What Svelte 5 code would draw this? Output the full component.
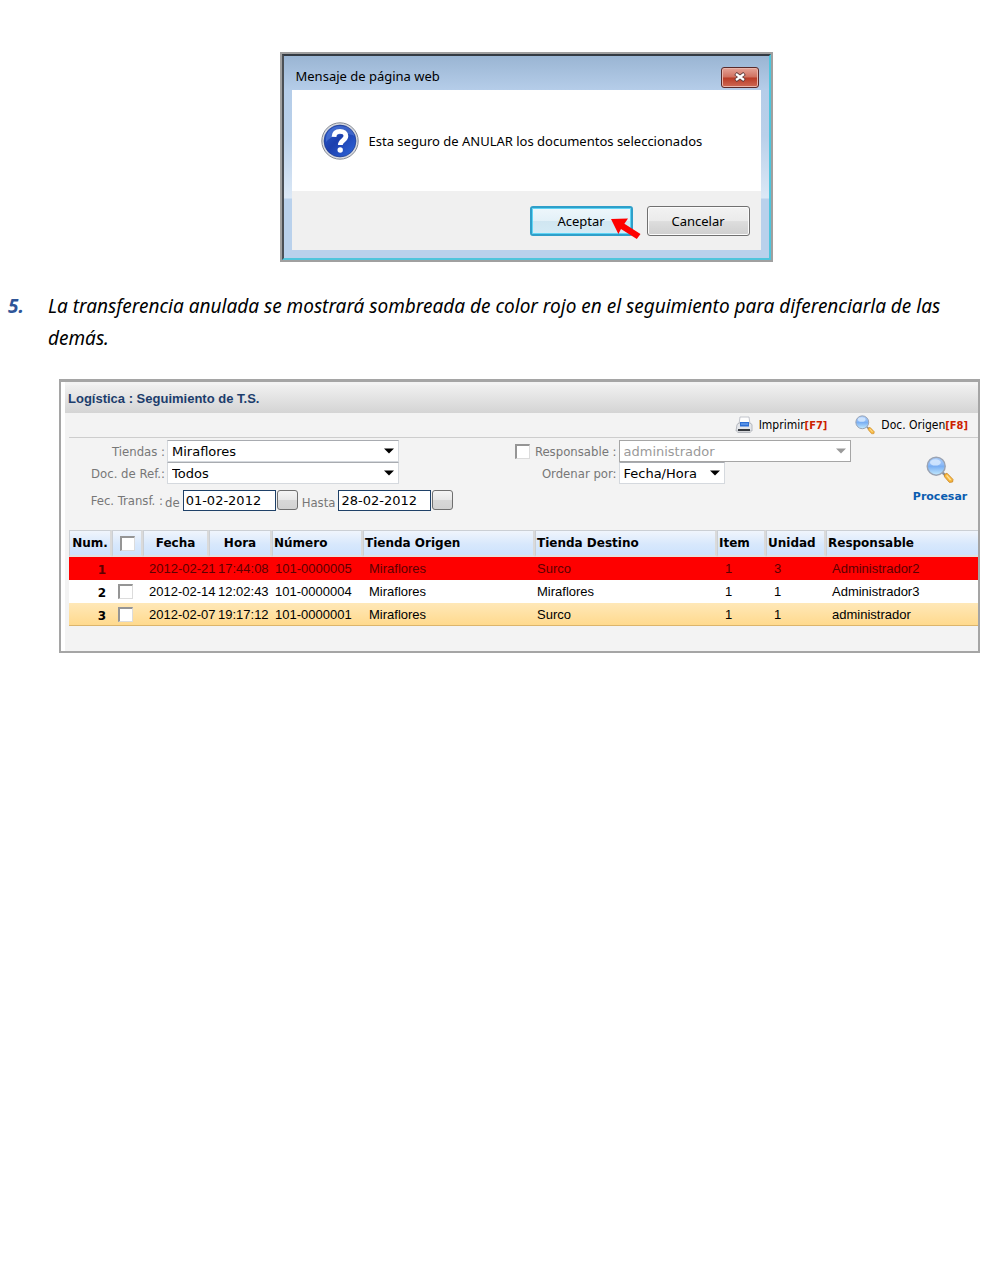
<script>
  const columns = [
    { key: 'num', label: 'Num.' },
    { key: 'check', label: '' },
    { key: 'fecha', label: 'Fecha' },
    { key: 'hora', label: 'Hora' },
    { key: 'numero', label: 'Número' },
    { key: 'origen', label: 'Tienda Origen' },
    { key: 'destino', label: 'Tienda Destino' },
    { key: 'item', label: 'Item' },
    { key: 'unidad', label: 'Unidad' },
    { key: 'responsable', label: 'Responsable' }
  ];

  const rows = [
    { num: 1, fecha: '2012-02-21', hora: '17:44:08', numero: '101-0000005', origen: 'Miraflores', destino: 'Surco', item: 1, unidad: 3, responsable: 'Administrador2', state: 'void' },
    { num: 2, fecha: '2012-02-14', hora: '12:02:43', numero: '101-0000004', origen: 'Miraflores', destino: 'Miraflores', item: 1, unidad: 1, responsable: 'Administrador3', state: 'plain' },
    { num: 3, fecha: '2012-02-07', hora: '19:17:12', numero: '101-0000001', origen: 'Miraflores', destino: 'Surco', item: 1, unidad: 1, responsable: 'administrador', state: 'active' }
  ];
</script>

{#snippet lens(cls)}
  <svg class={cls} viewBox="0 0 28 28" aria-hidden="true">
    <defs>
      <linearGradient id="glass-{cls}" x1="0" y1="0" x2="0" y2="1">
        <stop offset="0" stop-color="#a9cdfb" />
        <stop offset=".42" stop-color="#8dbaf6" />
        <stop offset=".5" stop-color="#79aef3" />
        <stop offset="1" stop-color="#c3eafe" />
      </linearGradient>
    </defs>
    <path d="M16.6 16.6l3 3" stroke="#8a8f98" stroke-width="2.4" />
    <path d="M18.500 18.400l2.500-1.200 6 6.200-.4 2.600-3.200.4-4.900-5.600z" fill="#f6b73c" stroke="#c98425" stroke-width=".8" />
    <path d="M20.6 19.4l4 4.6" stroke="#ffe09a" stroke-width="1.4" />
    <circle cx="10.200" cy="10.200" r="9" fill="url(#glass-{cls})" stroke="#9aa3b3" stroke-width="1.400" />
    <ellipse cx="9.4" cy="6.4" rx="5.400" ry="3.200" fill="#d9ebff" opacity=".8" />
  </svg>
{/snippet}

{#snippet arrow()}
  <svg class="arrow" viewBox="0 0 10 6" aria-hidden="true"><path d="M0 .5h10L5 5.5z" fill="currentColor" /></svg>
{/snippet}

<main>
  <div class="stage">
    <section class="dialog" role="dialog" aria-labelledby="dialog-title">
      <div class="window">
        <header class="titlebar">
          <h2 id="dialog-title">Mensaje de página web</h2>
          <button class="close" aria-label="Cerrar">
            <svg viewBox="0 0 14 10" aria-hidden="true">
              <path d="M2.500 1.500l9 7M11.500 1.500l-9 7" stroke="#5c3a3a" stroke-width="4" />
              <path d="M3 2l8 6M11 2l-8 6" stroke="#fff" stroke-width="2.200" />
            </svg>
          </button>
        </header>
        <div class="message">
          <svg class="question" viewBox="0 0 38 38" aria-hidden="true">
            <defs>
              <linearGradient id="ball" x1="0" y1="0" x2="1" y2="1">
                <stop offset="0" stop-color="#2a5ed0" />
                <stop offset=".45" stop-color="#1c3fae" />
                <stop offset="1" stop-color="#2f68dc" />
              </linearGradient>
            </defs>
            <circle cx="19" cy="19" r="18.2" fill="#d9dce2" stroke="#858a94" stroke-width="1" />
            <circle cx="19" cy="19" r="16" fill="url(#ball)" stroke="#1b3480" stroke-width=".6" />
            <path d="M5 20C4 9 12 4 19 4c8 0 13 4 14.500 10C25 10 12 12 5 20z" fill="#6f95e6" opacity=".4" />
            <path d="M13 14.800c.2-3.700 2.600-5.400 6-5.400 3.600 0 5.900 1.900 5.900 4.700 0 4.300-5.600 4.300-5.600 8.900" fill="none" stroke="#fff" stroke-width="4.800" />
            <circle cx="19.200" cy="28" r="2.700" fill="#fff" />
          </svg>
          <p>Esta seguro de ANULAR los documentos seleccionados</p>
        </div>
        <footer class="actions">
          <button class="btn primary">
            Aceptar
            <svg class="pointer" viewBox="0 0 30 22" aria-hidden="true"><path d="M0 1l17-.5-3.600 5.200L29.500 16l-3.700 5L10 11l-2.600 5z" fill="#fe0000" /></svg>
          </button>
          <button class="btn">Cancelar</button>
        </footer>
      </div>
    </section>
  </div>

  <div class="step">
    <span class="step-number">5.</span>
    <p>La transferencia anulada se mostrará sombreada de color rojo en el seguimiento para diferenciarla de las demás.</p>
  </div>

  <section class="panel">
    <h1>Logística : Seguimiento de T.S.</h1>
    <div class="toolbar">
      <button class="tool">
        <svg class="printer" viewBox="0 0 18 18" aria-hidden="true">
          <path d="M5 1h9l1 7H4z" fill="#fdfdfd" stroke="#b4b8c0" stroke-width=".8" />
          <path d="M2 8.500L4 7h11l2 1.500V15H1z" fill="#e4e6ea" stroke="#a7abb3" stroke-width=".8" />
          <path d="M5 6h9v4.500H5z" fill="#2d6fd6" />
          <path d="M6 8h7" stroke="#7fb2f5" stroke-width="1" />
          <path d="M3 14h12" stroke="#23262c" stroke-width="1.800" />
          <path d="M2.500 16.500h13" stroke="#b5b8be" stroke-width="1" />
        </svg>
        <span>Imprimir<b>[F7]</b></span>
      </button>
      <button class="tool">
        {@render lens('lens-small')}
        <span>Doc. Origen<b>[F8]</b></span>
      </button>
    </div>

    <form class="filters" onsubmit={(e) => e.preventDefault()}>
      <div class="group">
        <div class="field">
          <label for="tiendas">Tiendas :</label>
          <span class="select wide">
            <select id="tiendas"><option>Miraflores</option></select>
            {@render arrow()}
          </span>
        </div>
        <div class="field">
          <label for="doc">Doc. de Ref.:</label>
          <span class="select wide">
            <select id="doc"><option>Todos</option></select>
            {@render arrow()}
          </span>
        </div>
        <div class="field dates">
          <span class="caption">Fec. Transf. :</span>
          <label class="inline" for="desde">de</label>
          <input id="desde" type="text" value="01-02-2012" />
          <button class="picker" type="button" aria-label="Elegir fecha inicial"></button>
          <label class="inline" for="hasta">Hasta</label>
          <input id="hasta" type="text" value="28-02-2012" />
          <button class="picker" type="button" aria-label="Elegir fecha final"></button>
        </div>
      </div>

      <div class="group">
        <div class="field">
          <span class="with-check">
            <input id="filtrar" type="checkbox" aria-label="Filtrar por responsable" />
            <label for="responsable">Responsable :</label>
          </span>
          <span class="select wide disabled">
            <select id="responsable" disabled><option>administrador</option></select>
            {@render arrow()}
          </span>
        </div>
        <div class="field">
          <label for="orden">Ordenar por:</label>
          <span class="select narrow">
            <select id="orden"><option>Fecha/Hora</option></select>
            {@render arrow()}
          </span>
        </div>
      </div>

      <button class="process">
        {@render lens('lens-large')}
        Procesar
      </button>
    </form>

    <table>
      <colgroup>
        {#each columns as c}<col class={c.key} />{/each}
      </colgroup>
      <thead>
        <tr>
          {#each columns as c}
            <th class={c.key}>
              {#if c.key === 'check'}<input type="checkbox" aria-label="Seleccionar todos" />{:else}{c.label}{/if}
            </th>
          {/each}
        </tr>
      </thead>
      <tbody>
        {#each rows as row}
          <tr class={row.state}>
            {#each columns as c}
              <td class={c.key}>
                {#if c.key !== 'check'}{row[c.key]}{:else if row.state !== 'void'}<input type="checkbox" aria-label="Seleccionar fila {row.num}" />{/if}
              </td>
            {/each}
          </tr>
        {/each}
      </tbody>
    </table>
  </section>
</main>

<style>
  :global(body) {
    margin: 0;
    background: #fff;
  }
  main {
    padding: 52px 20px 40px 8px;
    font-family: 'DejaVu Sans', Verdana, sans-serif;
    color: #000;
  }
  h1, h2, p {
    margin: 0;
  }
  button, input, select {
    box-sizing: border-box;
    font: inherit;
    color: inherit;
  }
  button {
    padding: 0;
    border: 0;
    background: none;
  }

  /* Confirmation dialog */
  .stage {
    padding-left: 64px;
  }
  .dialog {
    box-sizing: border-box;
    max-width: 493px;
    margin: 0 auto;
    border: 2px solid #a0a0a0;
    font-family: 'Noto Sans', 'Open Sans', sans-serif;
    font-size: 13px;
  }
  .window {
    padding: 0 8px 8px;
    border: 2px solid #4fc5dc;
    border-top-color: #333a42;
    border-left-color: #4a4f55;
    background: linear-gradient(#9ab5d3 0, #b5cde9 34px, #b9d0ea 80px, #dbe8f6 142px, #b9d1ec 143px);
  }
  .titlebar {
    display: flex;
    align-items: center;
    justify-content: space-between;
    height: 34px;
    padding: 0 2px 0 4px;
  }
  h2 {
    padding-top: 6px;
    font-size: 13px;
    font-weight: 400;
  }
  .close {
    display: grid;
    place-items: center;
    width: 38px;
    height: 21px;
    margin-top: 8px;
    border: 1px solid #5a2a2a;
    border-radius: 3px;
    background: linear-gradient(#e5a397, #d0705f 48%, #b93a25 52%, #cf6a55);
    box-shadow: inset 0 0 0 1px #e9b5ab;
  }
  .close svg {
    width: 14px;
    height: 10px;
  }
  .message {
    display: flex;
    align-items: center;
    gap: 10px;
    height: 101px;
    padding-left: 29px;
    background: #fff;
  }
  .question {
    flex: none;
    width: 38px;
    height: 38px;
  }
  .actions {
    display: flex;
    justify-content: flex-end;
    gap: 14px;
    padding: 15px 11px 14px;
    background: #f0f0f0;
  }
  .btn {
    position: relative;
    width: 103px;
    height: 30px;
    border: 1px solid #707070;
    border-radius: 3px;
    background: linear-gradient(#f2f2f2, #ebebeb 48%, #dddddd 52%, #cfcfcf);
    box-shadow: inset 0 0 0 1px #fbfbfb;
  }
  .primary {
    border: 2px solid #2f9fc9;
    background: linear-gradient(#eef7fb, #e3f1f8 48%, #d0e6f1 52%, #d5ebf5);
    box-shadow: inset 0 0 0 1px #5fd4f5;
  }
  .pointer {
    position: absolute;
    left: 79px;
    top: 10px;
    width: 30px;
    height: 22px;
  }

  /* Numbered instruction */
  .step {
    display: grid;
    grid-template-columns: 40px 1fr;
    margin-top: 28px;
    font-family: 'Noto Sans', 'Open Sans', sans-serif;
    font-size: 19px;
    font-style: italic;
    line-height: 32px;
  }
  .step-number {
    font-weight: 700;
    color: #2f5597;
  }

  /* Tracking panel */
  .panel {
    margin: 25px 0 0 51px;
    padding: 3px 0 25px 4px;
    border: 2px solid #a5a5a5;
    border-top-width: 3px;
    background: linear-gradient(90deg, #fff 0 4px, #f3f3f3 4px);
  }
  h1 {
    padding-left: 3px;
    background: linear-gradient(#f0f0f0, #d4d4d4);
    font: bold 13px/28px 'Liberation Sans', Arial, sans-serif;
    color: #1c3d6c;
  }
  .toolbar {
    display: flex;
    justify-content: flex-end;
    gap: 28px;
    height: 24px;
    margin-left: 4px;
    padding-right: 10px;
    border-bottom: 1px solid #cdcdcd;
  }
  .tool {
    display: flex;
    align-items: center;
    gap: 6px;
    font: 12px 'DejaVu Sans Condensed', 'DejaVu Sans', sans-serif;
  }
  .tool b {
    color: #cc2200;
    font-size: 11px;
  }
  .printer {
    width: 18px;
    height: 18px;
  }
  .lens-small {
    width: 20px;
    height: 20px;
  }
  .filters {
    display: grid;
    grid-template-columns: 450fr 388fr 76fr;
    min-height: 90px;
    padding-top: 2px;
    font-size: 13px;
  }
  .group {
    min-width: 0;
  }
  .field {
    display: flex;
    align-items: center;
    height: 22px;
    color: #777;
  }
  .field label,
  .caption {
    flex: none;
    box-sizing: border-box;
    width: 102px;
    padding-right: 2px;
    text-align: right;
    font: 13px 'DejaVu Sans Condensed', 'DejaVu Sans', sans-serif;
  }
  .group + .group .field > label,
  .with-check {
    width: 104px;
  }
  .field label.inline {
    width: auto;
    padding: 4px 3px 0 0;
  }
  .field .picker + label.inline {
    padding-left: 4px;
  }
  .with-check {
    display: flex;
    align-items: center;
    justify-content: space-between;
  }
  .with-check label {
    width: auto;
  }
  .select {
    display: grid;
    align-items: center;
    color: #000;
  }
  .wide {
    width: 232px;
  }
  .narrow {
    width: 106px;
  }
  .select select {
    grid-area: 1 / 1;
    width: 100%;
    height: 22px;
    padding: 0 20px 0 4px;
    appearance: none;
    border: 1px solid #d5d9de;
    border-top-color: #a8abb0;
    border-radius: 0;
    background: #fff;
    opacity: 1;
  }
  .select .arrow {
    grid-area: 1 / 1;
    justify-self: end;
    width: 10px;
    height: 6px;
    margin-right: 5px;
    pointer-events: none;
  }
  .select.disabled {
    color: #9a9a9a;
  }
  .disabled select {
    border: 1px solid #a5a5a5;
  }
  .dates {
    margin-top: 5px;
  }
  .dates input {
    width: 93px;
    height: 21px;
    padding: 0 2px;
    border: 1px solid #1f4168;
    background: #fff;
    color: #000;
  }
  .dates .caption {
    width: 100px;
    padding-right: 2px;
    box-sizing: content-box;
    width: 98px;
  }
  .picker {
    width: 21px;
    height: 20px;
    margin-left: 1px;
    border: 1px solid #6f6f6f;
    border-radius: 3px;
    background: linear-gradient(#f5f5f5, #e8e8e8 48%, #d8d8d8 52%, #d2d2d2);
  }
  .dates {
    gap: 0;
  }
  .process {
    display: flex;
    flex-direction: column;
    align-items: center;
    gap: 6px;
    align-self: start;
    padding-top: 16px;
    font-size: 11px;
    font-weight: 700;
    color: #0a5cb0;
  }
  .lens-large {
    width: 28px;
    height: 28px;
  }
  input[type='checkbox'] {
    appearance: none;
    display: inline-block;
    width: 15px;
    height: 15px;
    margin: 0;
    vertical-align: middle;
    border: 1px solid #dcdcdc;
    border-top: 2px solid #959595;
    border-left: 2px solid #959595;
    background: #fff;
  }

  /* Transfers */
  table {
    width: calc(100% - 4px);
    margin-left: 4px;
    table-layout: fixed;
    border-collapse: separate;
    border-spacing: 0;
    font: 13px 'Liberation Sans', Arial, sans-serif;
    white-space: nowrap;
  }
  col.num { width: 43px; }
  col.check { width: 31px; }
  col.fecha { width: 66px; }
  col.hora { width: 63px; }
  col.numero { width: 91px; }
  col.origen { width: 172px; }
  col.destino { width: 182px; }
  col.item { width: 49px; }
  col.unidad { width: 60px; }
  th {
    height: 24px;
    padding: 0 1px;
    border: 1px solid #cbcfd4;
    border-right: 2px solid #dadada;
    border-bottom: 2px solid #e2e2e2;
    background: linear-gradient(#f0f5fc, #d8e8fc 55%, #cde3fd);
    text-align: left;
    font: bold 12px 'DejaVu Sans', Verdana, sans-serif;
  }
  th.num, th.check, th.fecha, th.hora {
    text-align: center;
  }
  th:last-child {
    border-right: 0;
  }
  td {
    height: 22px;
    padding: 0 6px;
    border-bottom: 1px solid transparent;
    line-height: 15px;
  }
  td.num {
    height: 18px;
    padding-top: 4px;
    text-align: right;
    font: bold 12px/15px 'DejaVu Sans', Verdana, sans-serif;
  }
  td.hora {
    padding: 0 0 0 9px;
  }
  td.fecha {
    padding-right: 0;
  }
  td.destino {
    padding-left: 2px;
  }
  td.item, td.unidad {
    padding-left: 8px;
  }
  td.numero {
    padding-left: 3px;
  }
  .void {
    background: #fe0000;
    color: #5c0000;
  }
  .plain {
    background: #fff;
  }
  .active {
    background: linear-gradient(#ffe8b8, #ffd98c);
  }
  .active td {
    border-bottom-color: #dcb56c;
  }
</style>
